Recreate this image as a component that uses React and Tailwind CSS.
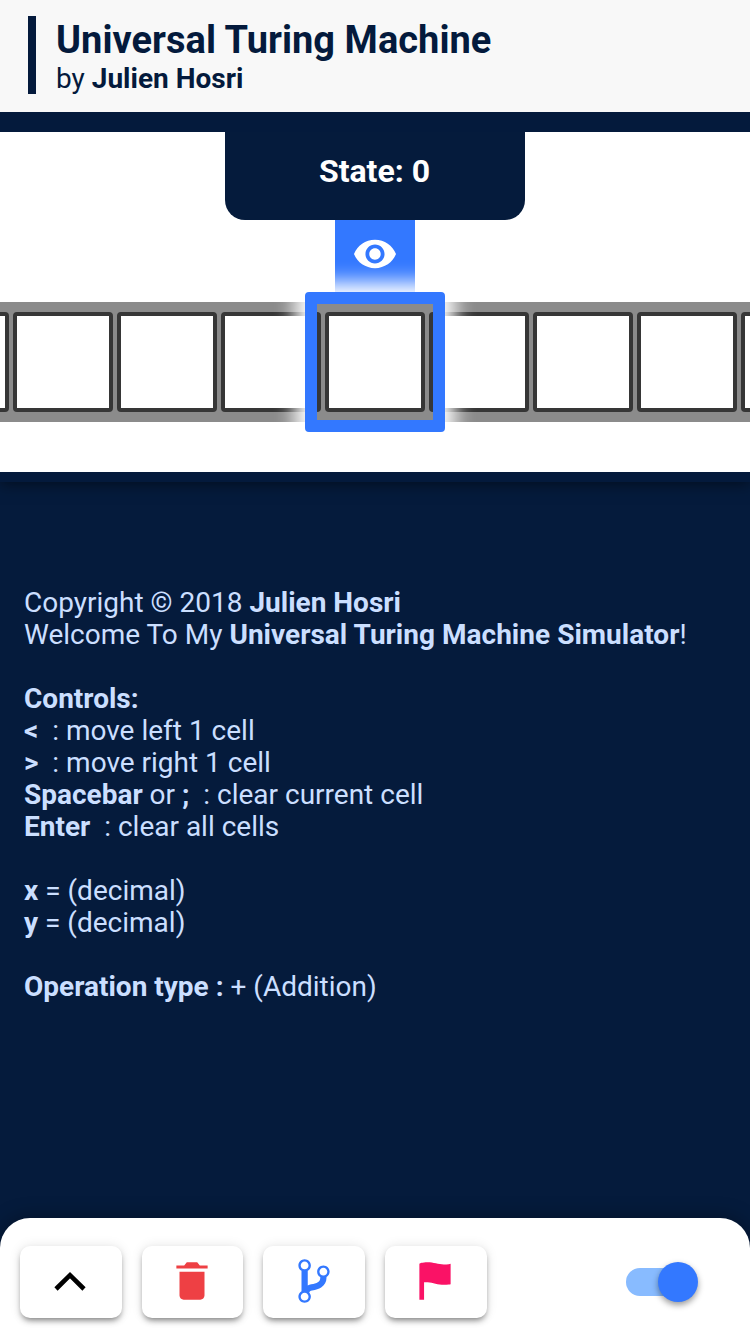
import { IoMdEye, IoMdTrash, IoMdGitBranch, IoMdFlag } from "react-icons/io";

function ToolButton({ children }) {
  return (
    <button className="flex h-18 w-[101.7px] shrink-0 items-center justify-center rounded-[10px] bg-white pr-px pb-0.5 shadow-[0_4px_6px_-2px_rgba(0,0,0,0.5),0_0_12px_rgba(0,0,0,0.1)]">
      {children}
    </button>
  );
}

export default function App() {
  const cells = Array.from({ length: 9 }, (_, i) => i);
  return (
    <div className="flex h-[1332px] w-[750px] flex-col overflow-hidden bg-[#051b3c] font-['Roboto',sans-serif]">
      <header className="relative z-20 flex h-28 shrink-0 bg-[#f8f8f8] px-7 pt-4 text-[#041a3c]">
        <div className="h-[78px] border-l-8 border-[#041a3c] pt-px pl-5">
          <h1 className="text-[38px] leading-[46px] font-bold tracking-[0.03px]">Universal Turing Machine</h1>
          <p className="text-[28px] leading-8">
            by <b>Julien Hosri</b>
          </p>
        </div>
      </header>

      <section className="relative z-10 flex h-[370px] shrink-0 flex-col items-center border-t-20 border-b-10 border-[#041a3c] bg-white shadow-[0_2px_14px_rgba(0,0,0,0.5)]">
        <div className="flex h-22 w-75 shrink-0 items-center justify-center rounded-b-[20px] bg-[#051b3c] pr-px pb-2.5 text-[32px] font-bold text-white">
          State: 0
        </div>
        <div className="flex h-[82px] w-20 shrink-0 justify-center bg-[#3378ff] pt-2.5 text-white">
          <IoMdEye size={48} />
        </div>
        <div className="relative flex h-30 w-full shrink-0 items-center justify-center gap-1 bg-[#8b8b8b]">
          {cells.map((i) => (
            <div key={i} className="size-25 shrink-0 rounded-[4px] border-4 border-[#363636] bg-white" />
          ))}
          <div className="absolute -top-2.5 left-[305px] size-35 rounded-[4px] border-12 border-[#3378ff] shadow-[0_0_20px_10px_white]" />
        </div>
      </section>

      <main className="grow px-6 pt-[105px] text-[28px] leading-8 text-[#cbdfff]">
        <p>Copyright © 2018 <b>Julien Hosri</b></p>
        <p>Welcome To My <b className="tracking-[0.02px]">Universal Turing Machine Simulator</b>!</p>
        <p className="mt-8 font-bold">Controls:</p>
        <p><b>&lt;</b> &nbsp;: move left 1 cell</p>
        <p><b>&gt;</b> &nbsp;: move right 1 cell</p>
        <p><b>Spacebar</b> or <b>;</b> &nbsp;: clear current cell</p>
        <p><b>Enter</b> &nbsp;: clear all cells</p>
        <p className="mt-8"><b>x</b> = (decimal)</p>
        <p><b>y</b> = (decimal)</p>
        <p className="mt-8"><b>Operation type :</b> + (Addition)</p>
      </main>

      <footer className="flex h-[114px] shrink-0 items-start gap-5 rounded-t-[30px] bg-white px-5 pt-7 shadow-[0_0_20px_rgba(0,0,0,0.35)]">
        <ToolButton>
          <svg width="32" height="20" viewBox="0 0 32 20" fill="none" stroke="#000" strokeWidth="4.6">
            <path d="M2 18 16 4.2 30 18" />
          </svg>
        </ToolButton>
        <ToolButton><IoMdTrash size={50} color="#ee4044" /></ToolButton>
        <ToolButton><IoMdGitBranch size={50} color="#3378ff" /></ToolButton>
        <ToolButton><IoMdFlag size={50} color="#fa1266" /></ToolButton>
        <div className="mt-4 mr-8 ml-auto flex h-10 w-18 items-center">
          <div className="h-7 w-17 rounded-full bg-[#88bbff]" />
          <div className="-ml-9 size-10 shrink-0 rounded-full bg-[#3378ff] shadow-[0_3px_6px_rgba(0,0,0,0.4)]" />
        </div>
      </footer>
    </div>
  );
}
